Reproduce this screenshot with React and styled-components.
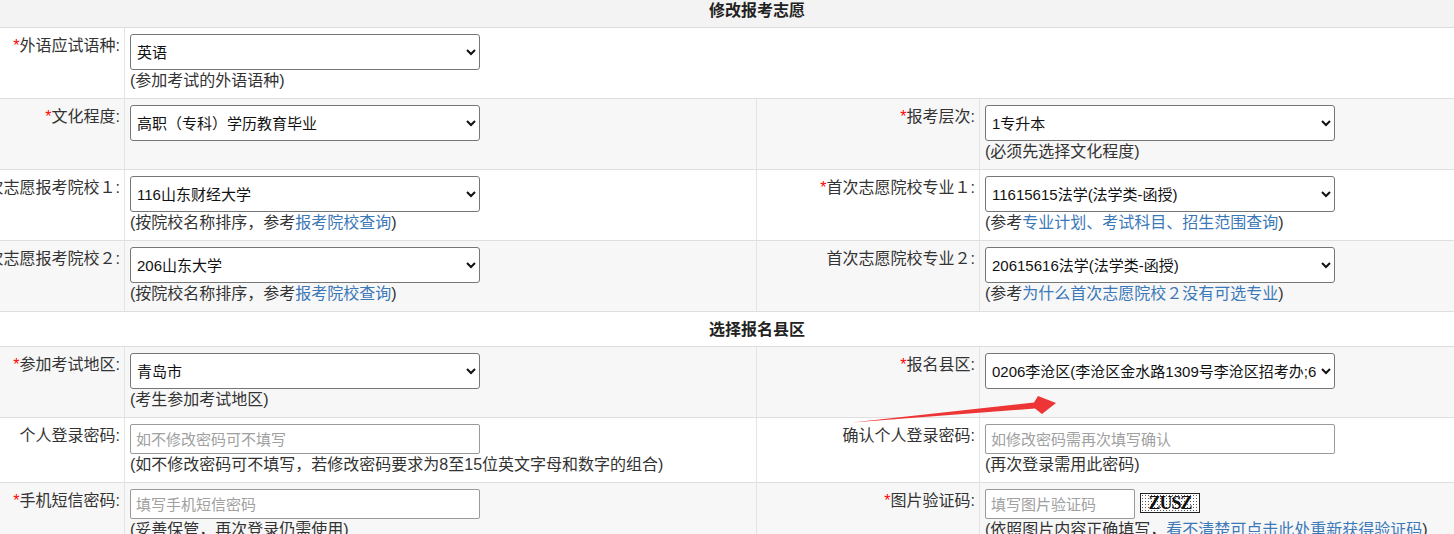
import React from "react";
import styled, { createGlobalStyle } from "styled-components";

const Global = createGlobalStyle`
  body {
    margin: 0;
    background: #fff;
    overflow: hidden;
    font-family: "Liberation Sans", "Noto Sans CJK SC", sans-serif;
    color: #333;
  }
`;

const COLS = "125px 632px 223px 1fr";

const Table = styled.div`
  position: relative;
  width: 1514px;
`;

const HeadRow = styled.div`
  padding: ${(p) => (p.$first ? "0 0 5px" : "7px 0 5px")};
  line-height: 22px;
  text-align: center;
  font-size: 16px;
  font-weight: bold;
  color: #222;
  background: ${(p) => (p.$alt ? "#f3f3f3" : "#fff")};
  border-bottom: 1px solid #dcdcdc;
`;

const Row = styled.div`
  display: grid;
  grid-template-columns: ${COLS};
  background: ${(p) => (p.$alt ? "#f7f7f7" : "#fff")};
  border-bottom: 1px solid #dfdfdf;
`;

const Label = styled.div`
  display: flex;
  justify-content: flex-end;
  white-space: nowrap;
  padding: 6px 4px 0 0;
  line-height: 24px;
  font-size: 16px;
  color: #333;
  border-right: 1px solid #e4e4e4;
  min-width: 0;
`;

const Star = styled.span`
  color: #f00;
`;

const Field = styled.div`
  grid-column: ${(p) => (p.$wide ? "2 / -1" : "auto")};
  padding: 6px 5px;
  border-right: ${(p) => (p.$last ? "none" : "1px solid #e4e4e4")};
  min-width: 0;
`;

const Select = styled.select`
  display: block;
  width: 350px;
  height: 36px;
  padding: 0 2px;
  font-family: "Liberation Sans", "Noto Sans CJK SC", sans-serif;
  font-size: 15px;
  color: #111;
  background: #fff;
  border: 1px solid #767676;
  border-radius: 3px;
`;

const Input = styled.input`
  display: block;
  box-sizing: border-box;
  width: ${(p) => p.$w || 350}px;
  height: 30px;
  padding: 0 5px;
  font-family: "Liberation Sans", "Noto Sans CJK SC", sans-serif;
  font-size: 15px;
  color: #111;
  background: #fff;
  border: 1px solid #9a9a9a;
  border-radius: 2px;
  &::placeholder {
    color: #a0a0a0;
  }
`;

const Inline = styled.div`
  display: flex;
  align-items: center;
  gap: 5px;
`;

const Captcha = styled.span`
  display: inline-block;
  width: 58px;
  height: 18px;
  margin-top: -2px;
  line-height: 18px;
  text-align: center;
  border: 1px solid #222;
  font-family: "Liberation Serif", serif;
  font-weight: bold;
  font-size: 18px;
  letter-spacing: -1px;
  color: #111;
  background-color: #fff;
  background-image: radial-gradient(#555 0.6px, transparent 0.8px);
  background-size: 3px 3px;
`;

const Hint = styled.div`
  line-height: 22px;
  font-size: 16px;
  color: #333;
  white-space: nowrap;
`;

const Link = styled.a`
  color: #3b78b8;
  text-decoration: none;
`;

const Arrow = styled.svg`
  position: absolute;
  left: 845px;
  top: 393px;
  pointer-events: none;
`;

const Lbl = ({ req, children }) => (
  <Label>
    {req && <Star>*</Star>}
    {children}
  </Label>
);

const SelectField = ({ value, hint, wide, last }) => (
  <Field $wide={wide} $last={last}>
    <Select defaultValue={value}>
      <option value={value}>{value}</option>
    </Select>
    <Hint>{hint}</Hint>
  </Field>
);

const App = () => (
  <>
    <Global />
    <Table>
      <HeadRow $first $alt>修改报考志愿</HeadRow>

      <Row>
        <Lbl req>外语应试语种:</Lbl>
        <SelectField wide last value="英语" hint="(参加考试的外语语种)" />
      </Row>

      <Row $alt>
        <Lbl req>文化程度:</Lbl>
        <SelectField value="高职（专科）学历教育毕业" hint={"\u00a0"} />
        <Lbl req>报考层次:</Lbl>
        <SelectField last value="1专升本" hint="(必须先选择文化程度)" />
      </Row>

      <Row>
        <Lbl req>首次志愿报考院校１:</Lbl>
        <SelectField
          value="116山东财经大学"
          hint={<>(按院校名称排序，参考<Link href="#">报考院校查询</Link>)</>}
        />
        <Lbl req>首次志愿院校专业１:</Lbl>
        <SelectField
          last
          value="11615615法学(法学类-函授)"
          hint={<>(参考<Link href="#">专业计划、考试科目、招生范围查询</Link>)</>}
        />
      </Row>

      <Row $alt>
        <Lbl>首次志愿报考院校２:</Lbl>
        <SelectField
          value="206山东大学"
          hint={<>(按院校名称排序，参考<Link href="#">报考院校查询</Link>)</>}
        />
        <Lbl>首次志愿院校专业２:</Lbl>
        <SelectField
          last
          value="20615616法学(法学类-函授)"
          hint={<>(参考<Link href="#">为什么首次志愿院校２没有可选专业</Link>)</>}
        />
      </Row>

      <HeadRow>选择报名县区</HeadRow>

      <Row $alt>
        <Lbl req>参加考试地区:</Lbl>
        <SelectField value="青岛市" hint="(考生参加考试地区)" />
        <Lbl req>报名县区:</Lbl>
        <SelectField
          last
          value="0206李沧区(李沧区金水路1309号李沧区招考办;68975166)"
          hint={"\u00a0"}
        />
      </Row>

      <Row>
        <Lbl>个人登录密码:</Lbl>
        <Field>
          <Input type="password" placeholder="如不修改密码可不填写" />
          <Hint>(如不修改密码可不填写，若修改密码要求为8至15位英文字母和数字的组合)</Hint>
        </Field>
        <Lbl>确认个人登录密码:</Lbl>
        <Field $last>
          <Input type="password" placeholder="如修改密码需再次填写确认" />
          <Hint>(再次登录需用此密码)</Hint>
        </Field>
      </Row>

      <Row $alt>
        <Lbl req>手机短信密码:</Lbl>
        <Field>
          <Input placeholder="填写手机短信密码" />
          <Hint>(妥善保管，再次登录仍需使用)</Hint>
        </Field>
        <Lbl req>图片验证码:</Lbl>
        <Field $last>
          <Inline>
            <Input $w={150} placeholder="填写图片验证码" />
            <Captcha>ZUSZ</Captcha>
          </Inline>
          <Hint>
            (依照图片内容正确填写，<Link href="#">看不清楚可点击此处重新获得验证码</Link>)
          </Hint>
        </Field>
      </Row>

      <Arrow width="220" height="40" viewBox="0 0 220 40">
        <path d="M7 29.5 L189 9.5 L193 3 L211 10 L197 21 L190 15.5 Z" fill="#ee3535" />
      </Arrow>
    </Table>
  </>
);

export default App;
